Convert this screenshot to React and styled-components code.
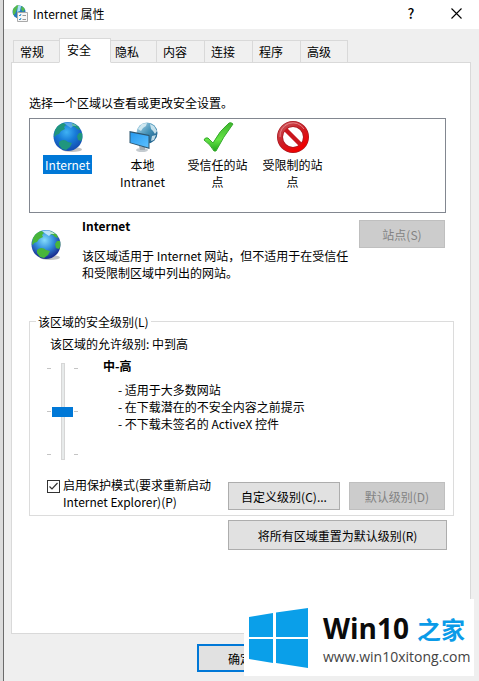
import React from "react";
import styled, { createGlobalStyle, css } from "styled-components";

const GlobalStyle = createGlobalStyle`
  * {
    box-sizing: border-box;
  }

  body {
    margin: 0;
    background: #dcdcdc;
    color: #000;
    font: 12px/17px "Noto Sans CJK SC", "Noto Sans", sans-serif;
  }

  button, input {
    font: inherit;
    margin: 0;
  }
`;

const Dialog = styled.div`
  display: flex;
  flex-direction: column;
  min-height: 100vh;
  margin-left: 3px;
  border-left: 1px solid #6b6b6b;
  background: #efefef;
`;

const TitleBar = styled.header`
  display: flex;
  align-items: center;
  height: 29px;
  padding: 0 16px 2px 8px;
  background: #fff;
`;

const Title = styled.h1`
  flex: 1;
  margin: 0 0 0 5px;
  font-size: 12px;
  font-weight: 400;
`;

const WindowButton = styled.button`
  display: flex;
  align-items: center;
  justify-content: center;
  width: 14px;
  height: 20px;
  margin-left: 31px;
  padding: 0;
  border: 0;
  background: none;
  color: #000;
  font-size: 14px;
  font-weight: 500;
`;

const Tabs = styled.nav`
  display: flex;
  align-items: flex-end;
  height: 34px;
  margin: 0 9px -1px;
`;

const Tab = styled.button`
  width: 48px;
  height: 23px;
  padding: 0 0 1px 6px;
  border: 1px solid #d9d9d9;
  border-right-width: ${(props) => (props.$last ? "1px" : "0")};
  background: #f0f0f0;
  color: #000;
  text-align: left;

  ${(props) =>
    props.$active &&
    css`
      position: relative;
      width: 52px;
      height: 25px;
      padding: 0 0 3px 7px;
      margin: 0 -3px 0 -2px;
      border-right-width: 1px;
      border-bottom-color: #fff;
      background: #fff;
    `}
`;

const Panel = styled.main`
  margin: 0 8px 0 7px;
  padding: 31px 16px 83px 17px;
  border: 1px solid #d9d9d9;
  background: #fff;
`;

const Text = styled.p`
  margin: 0;
`;

const ZoneList = styled.ul`
  display: flex;
  height: 95px;
  margin: 7px 8px 0 0;
  padding: 2px 0 0;
  border: 1px solid #828790;
  list-style: none;
`;

const Zone = styled.li`
  display: flex;
  flex-direction: column;
  align-items: center;
  width: 75px;
  text-align: center;
`;

const ZoneName = styled.span`
  max-width: 64px;
  margin-top: 2px;
  padding: 1px 2px;
  ${(props) =>
    props.$selected &&
    css`
      background: #0078d7;
      color: #fff;
    `}
`;

const ZoneInfo = styled.section`
  display: flex;
  align-items: flex-start;
  margin: 4px 9px 0 0;
`;

const ZoneIcon = styled.div`
  flex: none;
  width: 53px;
  padding: 12px 0 0 1px;
`;

const ZoneText = styled.div`
  flex: 1;
  padding-right: 4px;
`;

const Heading = styled.h2`
  margin: 0;
  font-size: 12px;
  font-weight: 700;
`;

const Description = styled(Text)`
  margin-top: 13px;
`;

const Button = styled.button`
  flex: none;
  width: ${(props) => props.$width || "86px"};
  height: ${(props) => (props.$tall ? "30px" : "28px")};
  padding: 0;
  border: 1px solid #adadad;
  background: #e1e1e1;
  color: #000;

  &:disabled {
    border-color: #bfbfbf;
    background: #ccc;
    color: #838383;
  }

  ${(props) =>
    props.$primary &&
    css`
      border: 2px solid #0078d7;
    `}
`;

const SitesButton = styled(Button)`
  margin-top: 3px;
`;

const Level = styled.fieldset`
  margin: 32px 0 0;
  padding: 5px 8px 5px 17px;
  border: 1px solid #dcdcdc;
`;

const Legend = styled.legend`
  margin-left: -11px;
  padding: 0 2px;
`;

const Allowed = styled(Text)`
  padding-left: 3px;
`;

const LevelBody = styled.div`
  display: flex;
  margin-top: 5px;
`;

const SliderBox = styled.div`
  display: flex;
  gap: 1px;
  width: 56px;
  padding-top: 6px;
`;

const Ticks = styled.div`
  display: flex;
  flex-direction: column;
  justify-content: space-between;
  width: 4px;
  height: 97px;
  padding: 5px 0;

  i {
    height: 1px;
    background: #c4c4c4;
  }
`;

const Slider = styled.input`
  appearance: none;
  writing-mode: vertical-lr;
  direction: rtl;
  width: 21px;
  height: 97px;
  background: linear-gradient(#e7eaea, #e7eaea) center / 2px 95px no-repeat,
    linear-gradient(#d6d6d6, #d6d6d6) center / 4px 97px no-repeat;

  &::-webkit-slider-thumb {
    appearance: none;
    width: 21px;
    height: 10px;
    background: #0078d7;
  }
`;

const Points = styled.ul`
  margin: 7px 0 0 15px;
  padding: 0;
  list-style: none;
`;

const Point = styled.li`
  &::before {
    content: "- ";
  }
`;

const Actions = styled.div`
  display: flex;
  align-items: flex-end;
  gap: 9px;
  margin-top: 16px;
`;

const CheckLabel = styled.label`
  display: flex;
  flex: 1;
  align-items: flex-start;
  gap: 3px;
`;

const CheckBox = styled.input`
  appearance: none;
  flex: none;
  width: 13px;
  height: 13px;
  margin-top: 4px;
  border: 1px solid #333;
  background: #fff;

  &:checked {
    background: url("data:image/svg+xml,%3Csvg xmlns='http://www.w3.org/2000/svg' viewBox='0 0 11 11'%3E%3Cpath d='M1.5 5.5L4 8l5.500-6' fill='none' stroke='%23333' stroke-width='1.2'/%3E%3C/svg%3E");
  }
`;

const ResetRow = styled.div`
  display: flex;
  justify-content: flex-end;
  margin: 4px 7px 0 0;
`;

const Footer = styled.footer`
  padding: 10px 0 9px 193px;
`;

const Watermark = styled.aside`
  position: fixed;
  right: 5px;
  bottom: 5px;
  display: flex;
  align-items: center;
  width: 230px;
  height: 77px;
  padding-left: 5px;
  gap: 15px;
  background: #fff;
`;

const Brand = styled.div`
  color: #0b0b0b;
  font: 700 28px/36px "Open Sans", "Noto Sans CJK SC", sans-serif;
  white-space: nowrap;

  span {
    margin-left: 8px;
    color: #0a9be8;
    font-size: 24px;
  }
`;

const Site = styled.div`
  color: #444;
  font: 14px/18px "Open Sans", sans-serif;
`;

const Globe = ({ size = 32, light }) => {
  const id = light ? "seaLight" : "sea";
  return (
    <svg width={size} height={size} viewBox="0 0 32 32" aria-hidden="true">
      <defs>
        <radialGradient id={id} cx="45%" cy="35%" r="62%">
          <stop offset="0" stopColor={light ? "#86dcfb" : "#3fb2f4"} />
          <stop offset=".5" stopColor={light ? "#3490de" : "#187cd8"} />
          <stop offset="1" stopColor={light ? "#1a2f92" : "#1450b4"} />
        </radialGradient>
      </defs>
      <ellipse cx="20" cy="28.500" rx="10" ry="2.500" fill="#999" opacity=".6" />
      <circle cx="16" cy="15.500" r="14.500" fill={`url(#${id})`} />
      <g fill={light ? "#48b53a" : "#20967d"}>
        <path d="M3 9Q6 3 12 2l2 2-2 2 1 2-4 2-2 3-3 1-1 2-1-1z" />
        <path d="M7 21q3-3 7-1.500l2 1.500 4 1-2 4-4 3-4-1-3-4z" />
        <path d="M20 2q4 1 7 4l1 3-3-1-2-2-3-1zM27 12l3 0q1 5-1 8l-3-1-1-4z" />
      </g>
      <path d="M12 2q8-2 13 3l-4 0-2 2-3-2z" fill="#d9f5ff" opacity={light ? ".8" : ".35"} />
    </svg>
  );
};

const Intranet = () => (
  <svg width="32" height="32" viewBox="0 0 32 32" aria-hidden="true">
    <defs>
      <linearGradient id="globe" x2="1" y2="1">
        <stop stopColor="#b9dcec" />
        <stop offset=".5" stopColor="#4592b8" />
        <stop offset="1" stopColor="#124f7c" />
      </linearGradient>
      <linearGradient id="screen" x2="1" y2="1">
        <stop stopColor="#2799ee" />
        <stop offset="1" stopColor="#5bc0ff" />
      </linearGradient>
    </defs>
    <circle cx="20" cy="12" r="10.500" fill="url(#globe)" />
    <path d="M11 8l4-5 5-1-1 3-3 2-2 3zM23 3l4 2 3 5-2 3-2-3-2-2zM25 15l4-1-2 5-3 1z" fill="#dceff5" opacity=".85" />
    <ellipse cx="15" cy="29" rx="6" ry="2" fill="#c4cbd0" />
    <path d="M12 25l6 1v3h-5z" fill="#a4adb3" />
    <path d="M2.500 10l20 4v14L2.500 22z" fill="#2e566f" />
    <path d="M3.500 11.500l18 3.500v11.500L3.500 21.500z" fill="url(#screen)" />
  </svg>
);

const Check = () => (
  <svg width="32" height="32" viewBox="0 0 32 32" aria-hidden="true">
    <defs>
      <linearGradient id="tick" x2="0" y2="1">
        <stop stopColor="#3fb42e" />
        <stop offset=".6" stopColor="#64e445" />
        <stop offset="1" stopColor="#20a51b" />
      </linearGradient>
    </defs>
    <path
      d="M2 19q1-3 4-2l5 5Q18 9 27 2q2-1 4 1Q21 16 14 30l-2 0Q8 23 2 19z"
      fill="url(#tick)"
      stroke="#36a92c"
      strokeLinejoin="round"
    />
  </svg>
);

const Restricted = () => (
  <svg width="32" height="32" viewBox="0 0 32 32" aria-hidden="true">
    <defs>
      <linearGradient id="ban" x2=".7" y2="1">
        <stop stopColor="#c8565b" />
        <stop offset=".5" stopColor="#cb1f26" />
        <stop offset="1" stopColor="#f00000" />
      </linearGradient>
    </defs>
    <g fill="none">
      <circle cx="16" cy="16" r="13" stroke="#aa1820" strokeWidth="6" />
      <path d="M7 7l18 18" stroke="#c9161d" strokeWidth="4.500" />
      <circle cx="16" cy="16" r="13" stroke="url(#ban)" strokeWidth="4.500" />
      <path d="M3 16A13 13 0 0 1 27 8" stroke="#f0a0a4" strokeWidth="1" opacity=".7" />
    </g>
  </svg>
);

const AppIcon = () => (
  <svg width="16" height="17" viewBox="0 0 16 17" aria-hidden="true">
    <circle cx="7" cy="7" r="6.500" fill="#2479bd" />
    <path d="M1 4l4-4 2 1-2 3-2 5-2 1zM10 1l3 3-2 3-2-3z" fill="#55b94d" />
    <path d="M6 1h3l-1 5-3 1z" fill="#a9e1f5" />
    <path d="M5.500 7.500h10v9h-10z" fill="#f7f7f7" stroke="#a9a9a9" />
    <path d="M7 10l1 1 1-2M7 14l1 1 1-2" fill="none" stroke="#258bcc" />
    <path d="M10.500 10.500H14M10.500 14.500H14" stroke="#999" />
  </svg>
);

const tabs = ["常规", "安全", "隐私", "内容", "连接", "程序", "高级"];

const zones = [
  { name: "Internet", icon: <Globe /> },
  { name: "本地 Intranet", icon: <Intranet /> },
  { name: "受信任的站点", icon: <Check /> },
  { name: "受限制的站点", icon: <Restricted /> },
];

const points = ["适用于大多数网站", "在下载潜在的不安全内容之前提示", "不下载未签名的 ActiveX 控件"];

export default function App() {
  return (
    <>
      <GlobalStyle />
      <Dialog>
        <TitleBar>
          <AppIcon />
          <Title>Internet 属性</Title>
          <WindowButton aria-label="帮助">?</WindowButton>
          <WindowButton aria-label="关闭">
            <svg width="11" height="11" viewBox="0 0 11 11">
              <path d="M.5 .5l10 10M10.500 .5l-10 10" stroke="#000" strokeWidth="1.100" />
            </svg>
          </WindowButton>
        </TitleBar>
        <Tabs>
          {tabs.map((tab, i) => (
            <Tab key={tab} $active={i === 1} $last={i === tabs.length - 1}>
              {tab}
            </Tab>
          ))}
        </Tabs>
        <Panel>
          <Text>选择一个区域以查看或更改安全设置。</Text>
          <ZoneList>
            {zones.map((zone, i) => (
              <Zone key={zone.name}>
                {zone.icon}
                <ZoneName $selected={i === 0}>{zone.name}</ZoneName>
              </Zone>
            ))}
          </ZoneList>
          <ZoneInfo>
            <ZoneIcon>
              <Globe light />
            </ZoneIcon>
            <ZoneText>
              <Heading>Internet</Heading>
              <Description>
                该区域适用于 Internet 网站，但不适用于在受信任和受限制区域中列出的网站。
              </Description>
            </ZoneText>
            <SitesButton disabled>站点(S)</SitesButton>
          </ZoneInfo>
          <Level>
            <Legend>该区域的安全级别(L)</Legend>
            <Allowed>该区域的允许级别: 中到高</Allowed>
            <LevelBody>
              <SliderBox>
                <Ticks><i /><i /><i /></Ticks>
                <Slider type="range" min="0" max="2" defaultValue="1" aria-label="安全级别" />
                <Ticks><i /><i /><i /></Ticks>
              </SliderBox>
              <div>
                <Heading>中-高</Heading>
                <Points>
                  {points.map((point) => (
                    <Point key={point}>{point}</Point>
                  ))}
                </Points>
              </div>
            </LevelBody>
            <Actions>
              <CheckLabel>
                <CheckBox type="checkbox" defaultChecked />
                <span>启用保护模式(要求重新启动 Internet Explorer)(P)</span>
              </CheckLabel>
              <Button $width="112px">自定义级别(C)...</Button>
              <Button $width="96px" disabled>默认级别(D)</Button>
            </Actions>
          </Level>
          <ResetRow>
            <Button $width="219px" $tall>将所有区域重置为默认级别(R)</Button>
          </ResetRow>
        </Panel>
        <Footer>
          <Button $primary>确定</Button>
        </Footer>
      </Dialog>
      <Watermark>
        <svg width="59" height="60" viewBox="0 0 59 60" aria-hidden="true">
          <path d="M0 9l24-4v24H0zM27 4.500L59 0v29H27zM0 31h24v24L0 51zM27 31h32v29l-32-5z" fill="#0a9fe9" />
        </svg>
        <div>
          <Brand>Win10<span>之家</span></Brand>
          <Site>www.win10xitong.com</Site>
        </div>
      </Watermark>
    </>
  );
}
